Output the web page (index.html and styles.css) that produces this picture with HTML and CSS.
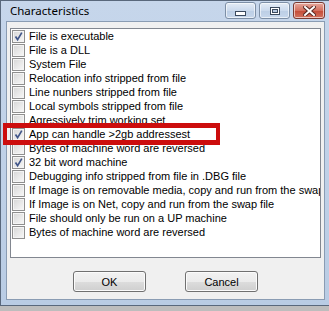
FILE: index.html
```html
<!DOCTYPE html>
<html lang="en">
<head>
    <meta charset="UTF-8">
    <title>Characteristics</title>
    <link rel="stylesheet" href="styles.css">
</head>
<body>
<div class="window">
    <div class="titlebar">
        <span class="title">Characteristics</span>
        <div class="caption-buttons">
            <button class="cap-btn" type="button">
                <svg width="11" height="5" viewBox="0 0 11 5"><rect x="0.5" y="0.5" width="10" height="4" fill="#fff" stroke="#3b4a5e"/></svg>
            </button>
            <button class="cap-btn" type="button">
                <svg width="10" height="8" viewBox="0 0 10 8"><rect x="0.5" y="0.5" width="9" height="7" fill="#fff" stroke="#3b4a5e"/><rect x="2.5" y="2.5" width="5" height="3" fill="#b7c9e0" stroke="#3b4a5e"/></svg>
            </button>
            <button class="cap-btn close" type="button">
                <svg width="13" height="10" viewBox="0 0 13 10"><path d="M2 1 L11 9 M11 1 L2 9" stroke="#5a2a24" stroke-width="4" stroke-linecap="square"/><path d="M2 1 L11 9 M11 1 L2 9" stroke="#fff" stroke-width="2" stroke-linecap="square"/></svg>
            </button>
        </div>
    </div>
    <div class="client">
        <div class="list" id="list"></div>
        <div class="highlight"></div>
        <div class="actions">
            <button class="btn" type="button">OK</button>
            <button class="btn" type="button">Cancel</button>
        </div>
    </div>
</div>

<script>
    const flags = [
        ['File is executable', true],
        ['File is a DLL', false],
        ['System File', false],
        ['Relocation info stripped from file', false],
        ['Line nunbers stripped from file', false],
        ['Local symbols stripped from file', false],
        ['Agressively trim working set', false],
        ['App can handle >2gb addressest', true],
        ['Bytes of machine word are reversed', false],
        ['32 bit word machine', true],
        ['Debugging info stripped from file in .DBG file', false],
        ['If Image is on removable media, copy and run from the swap file', false],
        ['If Image is on Net, copy and run from the swap file', false],
        ['File should only be run on a UP machine', false],
        ['Bytes of machine word are reversed', false]
    ];

    const list = document.getElementById('list');
    const tick = '<svg width="13" height="13" viewBox="0 0 13 13"><path d="M3.5 6.5 L5.6 9.6 L9.8 2.6" fill="none" stroke="#42578a" stroke-width="1.7"/></svg>';

    flags.forEach(flag => {
        const row = document.createElement('div');
        row.className = 'item';
        row.innerHTML = `
            <span class="check">${flag[1] ? tick : ''}</span>
            <span class="label">${flag[0].replace(/>/g, '&gt;')}</span>
        `;
        list.appendChild(row);
    });
</script>
</body>
</html>
```

FILE: styles.css
```css
body {
    margin: 0;
    background: #bdbdbd;
    font-family: "Liberation Sans", Arial, sans-serif;
    font-size: 11px;
    overflow: hidden;
}

.window {
    width: 331px;
    height: 306px;
    box-sizing: border-box;
    border: 1px solid #59687c;
    background: linear-gradient(#c6d6eb, #b9cce4);
    display: flex;
    flex-direction: column;
}

.titlebar {
    height: 20px;
    display: flex;
    justify-content: space-between;
    align-items: flex-start;
}

.title {
    font-family: "Noto Sans", sans-serif;
    font-size: 11.5px;
    line-height: 19px;
    padding-left: 9px;
    color: #000;
}

.caption-buttons {
    display: flex;
    gap: 3px;
    margin-top: 1px;
    margin-right: 5px;
}

.cap-btn {
    width: 31px;
    height: 17px;
    padding: 0;
    border: 1px solid #7d8fa6;
    border-radius: 3px;
    background: linear-gradient(#e4ecf6, #cbdaed 50%, #bccee5 51%, #c7d7ec);
    box-shadow: inset 0 0 0 1px rgba(255, 255, 255, 0.6);
    display: flex;
    align-items: center;
    justify-content: center;
}

.cap-btn svg {
    display: block;
}

.cap-btn:first-child svg {
    margin-top: 5px;
}

.cap-btn.close {
    width: 32px;
    border-color: #7a3a32;
    background: linear-gradient(#e6a99e, #d4705f 50%, #c44a36 51%, #d2725f);
}

.client {
    position: relative;
    flex: 1;
    margin: 0 5px 5px 5px;
    border: 1px solid #8a9cb3;
    background: #f0f0f0;
    padding: 6px 3px 0 3px;
    display: flex;
    flex-direction: column;
}

.list {
    height: 230px;
    box-sizing: border-box;
    border: 1px solid #828790;
    background: #fff;
    overflow: hidden;
}

.item {
    height: 14px;
    display: flex;
    align-items: center;
    white-space: nowrap;
}

.check {
    width: 11px;
    height: 11px;
    margin-left: 1px;
    margin-right: 4px;
    flex: none;
    position: relative;
    border: 1px solid #8f8f8f;
    background: linear-gradient(135deg, #d6d6d6, #f8f8f8);
    box-shadow: inset 0 0 0 1px #f4f4f4;
}

.check svg {
    position: absolute;
    left: -1px;
    top: -1px;
}

.label {
    color: #000;
    line-height: 14px;
}

.highlight {
    position: absolute;
    left: -4px;
    top: 101px;
    width: 209px;
    height: 12px;
    border: 5px solid #cc0d0d;
    border-left-width: 4px;
    border-right-width: 4px;
}

.actions {
    display: flex;
    justify-content: center;
    gap: 39px;
    margin-top: 13px;
}

.btn {
    width: 73px;
    height: 21px;
    padding: 0;
    font-family: "Liberation Sans", Arial, sans-serif;
    font-size: 11px;
    color: #000;
    border: 1px solid #707070;
    border-radius: 3px;
    background: linear-gradient(#f2f2f2, #ebebeb 50%, #dddddd 51%, #cfcfcf);
    box-shadow: inset 0 0 0 1px #fbfbfb;
}
```
